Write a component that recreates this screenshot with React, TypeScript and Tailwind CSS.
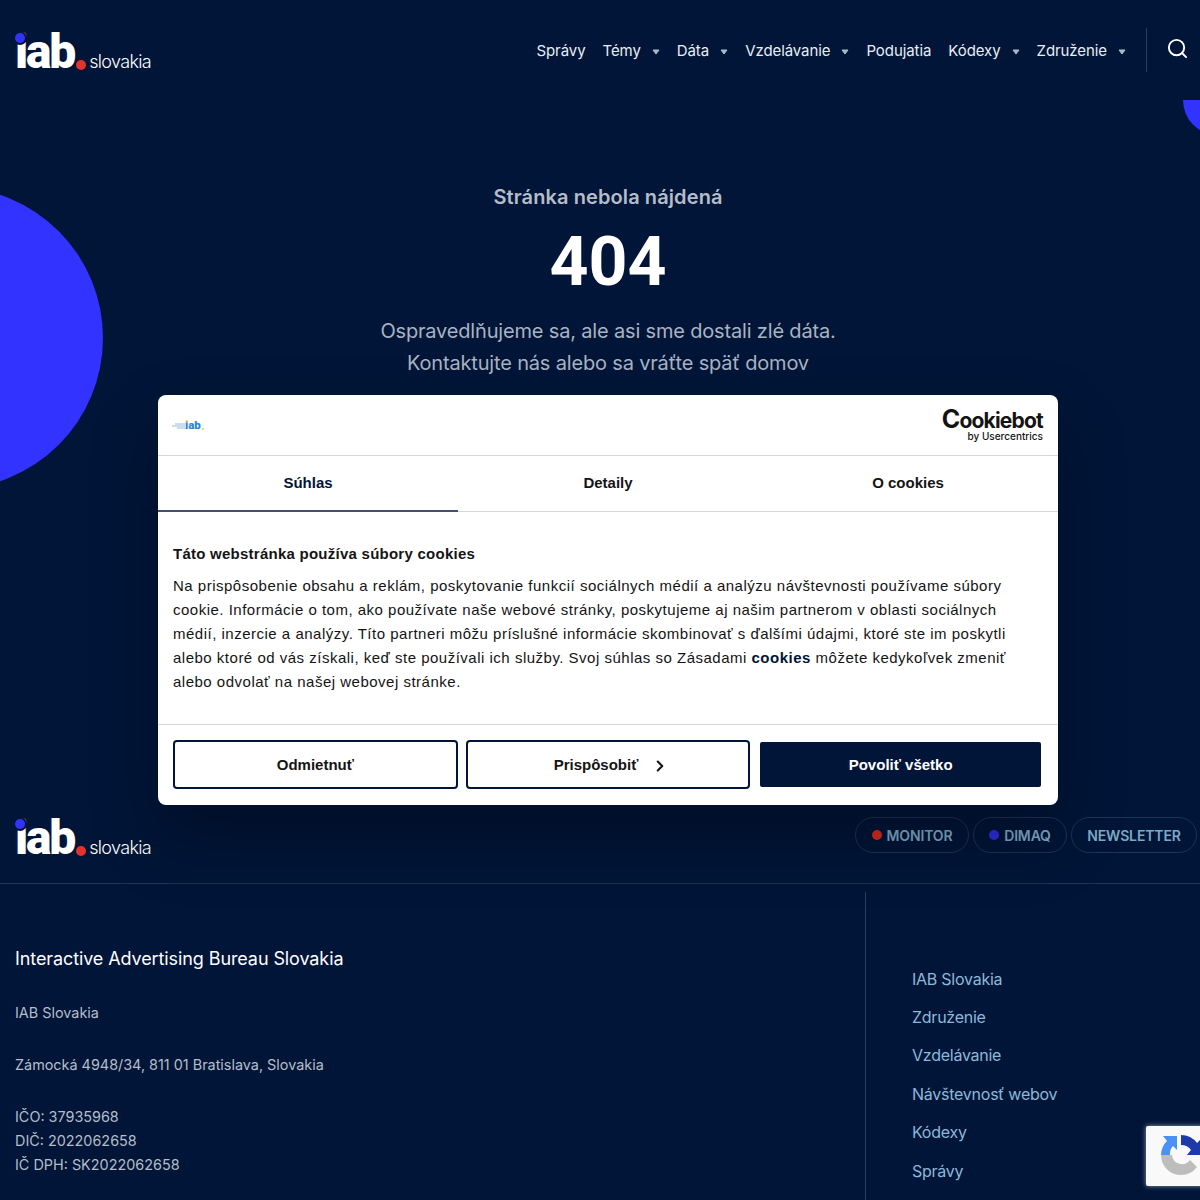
import { Search, ChevronRight } from "lucide-react";

const navItems = [
  { label: "Správy", arrow: false },
  { label: "Témy", arrow: true },
  { label: "Dáta", arrow: true },
  { label: "Vzdelávanie", arrow: true },
  { label: "Podujatia", arrow: false },
  { label: "Kódexy", arrow: true },
  { label: "Združenie", arrow: true },
];

const footerLinks = ["IAB Slovakia", "Združenie", "Vzdelávanie", "Návštevnosť webov", "Kódexy", "Správy"];

function Logo() {
  return (
    <div className="flex items-end h-[40px] w-[140px] font-['Roboto',sans-serif] text-white">
      <div className="relative text-[48px] leading-[40px] font-black tracking-[-2.2px] h-[40px]">
        iab
        <span className="absolute left-0 top-[1px] w-[10px] h-[10px] rounded-full bg-[#3333ff] ring-2 ring-[#001538]" />
      </div>
      <span className="w-[10px] h-[10px] rounded-full bg-[#e5322d] ml-[2px] mb-[2px] shrink-0" />
      <span className="text-[18px] leading-[20px] ml-[3px] tracking-[-0.65px] font-light font-['Inter',sans-serif]">slovakia</span>
    </div>
  );
}

function NavArrow() {
  return (
    <svg width="8" height="6" viewBox="0 0 8 6" className="ml-[11px]">
      <path d="M1 1h6L4 5z" fill="#a9bccb" stroke="#a9bccb" strokeLinejoin="round" />
    </svg>
  );
}

function RecaptchaIcon() {
  return (
    <svg width="40" height="40" viewBox="0 0 40 40">
      <path d="M0 20A20 20 0 0 0 20 40A20 20 0 0 0 36 32L29 25A10 10 0 0 1 11 20z" fill="#bdbdbd" />
      <path d="M0 20A20 20 0 0 1 6 6L2 1H16V15L12 11A11 11 0 0 0 9 20z" fill="#4a90f5" />
      <path d="M20 0A20 20 0 0 1 36 8L40 4V20H26L30 15A12 12 0 0 0 20 10z" fill="#1c3aa9" />
    </svg>
  );
}

function CookieDialog() {
  return (
    <div className="absolute left-[158px] top-[395px] w-[900px] h-[410px] bg-white rounded-lg shadow-[0_32px_68px_rgba(0,0,0,0.3)] font-['Liberation_Sans',sans-serif] text-[#141414] flex flex-col">
      <div className="h-[61px] border-b border-[#d6d6d6] flex items-center justify-between pl-[14px] pr-[15px] shrink-0">
        <div className="flex items-center mt-[1px]">
          <svg width="13" height="8" viewBox="0 0 13 8">
            <path d="M0 4h13M3 2h10M5 6h8" stroke="#8fbce0" strokeWidth="1" />
          </svg>
          <span className="relative text-[11.5px] leading-none font-black text-[#2b84d6] font-['Roboto',sans-serif]">
            iab
            <span className="absolute left-[0.5px] top-[0px] w-[2.5px] h-[2.5px] rounded-full bg-[#f5c542]" />
          </span>
          <span className="w-[2px] h-[2px] rounded-full bg-[#f5c542] self-end mb-[1px] ml-[1px]" />
        </div>
        <div className="flex flex-col items-end font-['Inter',sans-serif] text-[#141414]">
          <span className="text-[21px] leading-[20px] font-bold tracking-[-0.8px]">
            <span className="text-[25px]">C</span>ookiebot
          </span>
          <span className="text-[10px] leading-[11px] font-medium">by Usercentrics</span>
        </div>
      </div>

      <div className="h-[56px] border-b border-[#d6d6d6] flex shrink-0 text-[15px] font-bold">
        <div className="w-[300px] flex items-center justify-center border-b-2 border-[#42526e] h-[56px] text-[#001538]">Súhlas</div>
        <div className="w-[300px] flex items-center justify-center">Detaily</div>
        <div className="w-[300px] flex items-center justify-center">O cookies</div>
      </div>

      <div className="flex-1 px-[15px] pt-[30px] tracking-[0.5px]">
        <h2 className="text-[15px] leading-[24px] font-bold tracking-[0.25px]">Táto webstránka používa súbory cookies</h2>
        <p className="text-[15px] leading-[24px] mt-[8px]">
          Na prispôsobenie obsahu a reklám, poskytovanie funkcií sociálnych médií a analýzu návštevnosti používame súbory cookie. Informácie o tom, ako používate naše webové stránky, poskytujeme aj našim partnerom v oblasti sociálnych médií, inzercie a analýzy. Títo partneri môžu príslušné informácie skombinovať s ďalšími údajmi, ktoré ste im poskytli alebo ktoré od vás získali, keď ste používali ich služby. Svoj súhlas so Zásadami <span className="font-bold text-[#001538]">cookies</span> môžete kedykoľvek zmeniť alebo odvolať na našej webovej stránke.
        </p>
      </div>

      <div className="h-[81px] border-t border-[#d6d6d6] px-[15px] pt-[15px] grid grid-cols-3 gap-2 shrink-0 text-[15px] font-bold">
        <button className="h-[49px] pt-[1px] border-2 border-[#001538] rounded">Odmietnuť</button>
        <button className="h-[49px] pt-[1px] pl-[7px] border-2 border-[#001538] rounded flex items-center justify-center gap-[13px]">
          Prispôsobiť
          <ChevronRight size={18} strokeWidth={2.75} className="mt-[2px]" />
        </button>
        <button className="h-[49px] pt-[1px] border-2 border-white bg-[#001538] rounded text-white">Povoliť všetko</button>
      </div>
    </div>
  );
}

export default function App() {
  return (
    <div className="relative w-[1200px] h-[1200px] overflow-hidden bg-[#001538] font-['Inter',sans-serif]">
      {/* decorative circles */}
      <div className="absolute left-[-199px] top-[187px] w-[302px] h-[302px] rounded-full bg-[#3333ff]" />
      <div className="absolute left-[1183px] top-[65px] w-[70px] h-[70px] rounded-full bg-[#3333ff]" />

      <header className="relative h-[100px] bg-[#001538] flex items-center justify-between pl-[15px]">
        <div className="mt-[3px]">
          <Logo />
        </div>
        <div className="flex items-center h-[44px] -mt-[1px]">
          <nav className="flex items-center gap-[17px] text-[15px] text-[#e8eef3] tracking-[-0.08px] mt-[4px]">
            {navItems.map((item) => (
              <div key={item.label} className="flex items-center">
                <span>{item.label}</span>
                {item.arrow && <NavArrow />}
              </div>
            ))}
          </nav>
          <div className="w-px h-[44px] bg-[#2b4060] ml-[20px]" />
          <div className="w-[53px] pl-[19px]">
            <Search size={23} strokeWidth={2} className="text-white -mt-[3px]" />
          </div>
        </div>
      </header>

      <main className="relative w-[1216px] h-[717px] flex flex-col items-center pt-[84px]">
        <h2 className="text-[20px] leading-[26px] font-semibold text-[#b5bdc9] tracking-[0.1px]">Stránka nebola nájdená</h2>
        <h1 className="text-[68px] leading-[64px] font-bold text-white font-['Roboto',sans-serif] mt-[20px]">404</h1>
        <p className="text-[20px] leading-[32px] text-[#a9b3c2] text-center mt-[21px] tracking-[-0.17px]">
          Ospravedlňujeme sa, ale asi sme dostali zlé dáta.
          <br />
          Kontaktujte nás alebo sa vráťte späť domov
        </p>
      </main>

      <footer className="relative">
        <div className="h-[67px] flex justify-between pl-[15px] pr-[3px] border-b border-[#1f3352]">
          <div className="mt-[1px]">
            <Logo />
          </div>
          <div className="flex gap-[4px] h-[36px] text-[14px] font-semibold text-[#7ea9c6] tracking-[-0.15px]">
            <div className="flex items-center gap-[5px] w-[114px] justify-center border border-[#1f3352] rounded-full">
              <span className="w-[10px] h-[10px] rounded-full bg-[#d42c1f]" />
              MONITOR
            </div>
            <div className="flex items-center gap-[5px] w-[94px] justify-center border border-[#1f3352] rounded-full">
              <span className="w-[10px] h-[10px] rounded-full bg-[#2d2de0]" />
              DIMAQ
            </div>
            <div className="flex items-center w-[126px] justify-center border border-[#1f3352] rounded-full">NEWSLETTER</div>
          </div>
        </div>
        <div className="flex pt-[8px]">
          <div className="w-[866px] pl-[15px] pt-[53px] border-r border-[#2b4060] h-[400px] text-[14.4px] leading-[24px] text-[#b5bdc9]">
            <h3 className="text-[18px] leading-[28px] text-white tracking-[-0.1px]">Interactive Advertising Bureau Slovakia</h3>
            <p className="mt-[28px]">IAB Slovakia</p>
            <p className="mt-[28px]">Zámocká 4948/34, 811 01 Bratislava, Slovakia</p>
            <p className="mt-[28px]">
              IČO: 37935968
              <br />
              DIČ: 2022062658
              <br />
              IČ DPH: SK2022062658
            </p>
          </div>
          <ul className="pl-[46px] pt-[74.7px] flex flex-col gap-[14.4px] text-[16px] leading-[24px] text-[#8db8d8] tracking-[-0.25px]">
            {footerLinks.map((link) => (
              <li key={link}>{link}</li>
            ))}
          </ul>
        </div>
      </footer>

      <CookieDialog />

      {/* recaptcha badge */}
      <div className="absolute left-[1146px] top-[1126px] w-[60px] h-[60px] bg-[#f9f9f9] rounded-[2px] shadow-[0_0_5px_rgba(160,170,190,0.9)] overflow-hidden pl-[15px] pt-[9px]">
        <RecaptchaIcon />
      </div>
    </div>
  );
}
